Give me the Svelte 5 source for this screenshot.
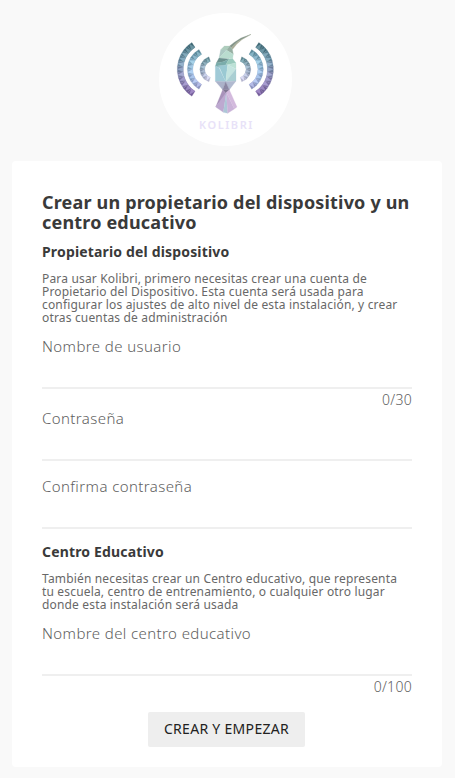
<script>
  const rings = [
    { cx: 163, r: 87.5, half: 57, w: 17.5, n: 11 },
    { cx: 165, r: 60, half: 61, w: 16, n: 8 },
    { cx: 174, r: 32.5, half: 72, w: 14, n: 6 }
  ];
  const ramps = [
    [[72, 114, 126], [114, 152, 172], [142, 138, 184], [128, 102, 164]],
    [[96, 142, 158], [140, 182, 206], [150, 178, 216], [164, 166, 210]],
    [[94, 138, 148], [136, 164, 180], [156, 168, 194], [214, 212, 236]]
  ];

  function tone(ramp, t, d) {
    const p = Math.min(2.999, Math.max(0, t * 3));
    const i = Math.floor(p);
    const f = p - i;
    const c = ramp[i].map((v, k) => Math.round(v + (ramp[i + 1][k] - v) * f + d));
    return `rgb(${c.join(',')})`;
  }

  const facets = rings.flatMap((g, ri) => {
    const at = (t, out) => {
      const a = ((1 - t * 2) * g.half * Math.PI) / 180;
      const r = g.r + (out * g.w) / 2;
      return `${(g.cx - r * Math.cos(a)).toFixed(1)},${(183 - r * Math.sin(a)).toFixed(1)}`;
    };
    const list = [];
    for (let i = 0; i < g.n; i++) {
      const a = i / g.n;
      const b = (i + 1) / g.n;
      const m = (a + b) / 2;
      list.push({ pts: `${at(a, 1)} ${at(b, 1)} ${at(b, -1)} ${at(a, -1)}`, fill: tone(ramps[ri], m, i % 2 ? -22 : -14) });
      list.push({ pts: `${at(a, -1)} ${at(m, 1)} ${at(b, -1)}`, fill: tone(ramps[ri], m, i % 2 ? 20 : 30) });
    }
    return list;
  });

  const bird = [
    ['288,78 258,89 238,102 224,113 229,118 248,100', '#84958a'],
    ['288,78 262,93 245,108 233,123 229,118 248,100', '#a9ac96'],
    ['197,124 208,113 224,113 215,126', '#aecdbd'],
    ['224,113 232,122 235,138 215,126', '#97b0a3'],
    ['197,124 215,126 192,149', '#adc9c4'],
    ['215,126 235,138 233,151 192,149', '#b9dccf'],
    ['192,149 222,152 205,160 184,164', '#6c918f'],
    ['184,164 205,160 222,152 212,170 181,174', '#7aacab'],
    ['222,152 233,151 243,164 212,170', '#9acabd'],
    ['181,174 212,170 192,178', '#95bdc4'],
    ['181,174 192,178 212,220 181,219', '#a0cad7'],
    ['192,174 218,169 212,220', '#9ac9d3'],
    ['218,169 243,164 243,182', '#bce1d6'],
    ['218,169 243,182 212,220', '#c4e4e0'],
    ['243,182 243,218 212,220', '#aacfd3'],
    ['181,219 212,220 203,244', '#abb2c9'],
    ['212,220 243,218 223,244', '#b1bad0'],
    ['212,220 203,244 223,244', '#8a87a3'],
    ['203,244 223,244 214,257', '#807693'],
    ['203,244 214,257 182,296', '#a892ba'],
    ['214,252 205,312 182,296', '#bda9d0'],
    ['214,252 218,315 205,312', '#adc7d7'],
    ['214,252 238,302 218,315', '#cab3d8'],
    ['214,252 223,244 246,296 238,302', '#d3badd']
  ];

  const intro = [
    'Para usar Kolibri, primero necesitas crear una cuenta de',
    'Propietario del Dispositivo. Esta cuenta será usada para',
    'configurar los ajustes de alto nivel de esta instalación, y crear',
    'otras cuentas de administración'
  ];
  const facility = [
    'También necesitas crear un Centro educativo, que representa',
    'tu escuela, centro de entrenamiento, o cualquier otro lugar',
    'donde esta instalación será usada'
  ];
</script>

{#snippet field(label, count, type, cls)}
  <label class="field {cls}">
    <span class="label">{label}</span>
    <input {type} />
    {#if count}<span class="count">{count}</span>{/if}
  </label>
{/snippet}

<div class="page">
  <svg class="logo" viewBox="12 14 399 399" role="img" aria-label="Kolibri">
    <circle cx="211.5" cy="213.5" r="199.5" fill="#fff" />
    <g>
      {#each facets as f}<polygon points={f.pts} fill={f.fill} stroke={f.fill} stroke-width="0.6" />{/each}
    </g>
    <g transform="translate(422 0) scale(-1 1)">
      {#each facets as f}<polygon points={f.pts} fill={f.fill} stroke={f.fill} stroke-width="0.6" />{/each}
    </g>
    {#each bird as [pts, fill]}<polygon points={pts} {fill} stroke={fill} stroke-width="0.7" />{/each}
    <text x="132" y="362" textLength="160">KOLIBRI</text>
  </svg>

  <form class="card">
    <h1>Crear un propietario del dispositivo y un<br />centro educativo</h1>
    <h2>Propietario del dispositivo</h2>
    <p>{#each intro as line}<span>{line}</span>{/each}</p>
    {@render field('Nombre de usuario', '0/30', 'text', 'user')}
    {@render field('Contraseña', '', 'password', 'pass')}
    {@render field('Confirma contraseña', '', 'password', 'confirm')}
    <h2 class="second">Centro Educativo</h2>
    <p>{#each facility as line}<span>{line}</span>{/each}</p>
    {@render field('Nombre del centro educativo', '0/100', 'text', 'center')}
    <button type="button">CREAR Y EMPEZAR</button>
  </form>
</div>

<style>
  :global(body) { margin: 0; background: #f9f9f9; }
  .page {
    box-sizing: border-box;
    height: 778px;
    padding: 12.5px 13px 0 12px;
    display: flex;
    flex-direction: column;
    align-items: center;
    overflow: hidden;
    background: #f9f9f9;
    font-family: "Noto Sans", sans-serif;
    color: #3a3a3a;
  }
  .logo { width: 133px; height: 133px; flex: none; margin-right: 3px; }
  .logo text { font: 600 33px "Noto Sans", sans-serif; fill: #e8e2f8; }
  .card {
    box-sizing: border-box;
    width: 430px;
    height: 606px;
    margin-top: 15.5px;
    padding: 31px 30px 0;
    background: #fff;
    border-radius: 4px;
    display: flex;
    flex-direction: column;
  }
  h1 { margin: 0; font-size: 18px; line-height: 20px; font-weight: 700; letter-spacing: 0.18px; white-space: nowrap; }
  h2 { margin: 11px 0 0; font-size: 14px; line-height: 18px; font-weight: 700; letter-spacing: 0.16px; }
  p { margin: 11px 0 0; font-size: 12px; line-height: 13px; letter-spacing: 0.165px; color: #686868; }
  p span { display: block; white-space: nowrap; }
  .field { display: flex; flex-direction: column; }
  .label { font-size: 15px; line-height: 20px; font-weight: 300; color: #606060; letter-spacing: 0.4px; }
  input {
    height: 33px;
    box-sizing: border-box;
    padding: 0;
    border: 0;
    border-bottom: 2px solid #efefef;
    background: none;
    outline: none;
  }
  .count { align-self: flex-end; font-size: 14px; line-height: 20px; height: 20px; margin-top: 1px; font-weight: 300; color: #606060; letter-spacing: 0.3px; }
  .user { margin-top: 12px; }
  .pass { margin-top: -2px; }
  .confirm { margin-top: 15px; }
  .second { margin-top: 14px; }
  .center { margin-top: 12px; }
  button {
    align-self: center;
    width: 157px;
    height: 35px;
    margin: 15px 1px 0 0;
    padding: 0 0 2px;
    border: 0;
    border-radius: 2px;
    background: #eee;
    color: #212121;
    font: 400 14px "Noto Sans", sans-serif;
    letter-spacing: 0.3px;
    white-space: nowrap;
  }
</style>
